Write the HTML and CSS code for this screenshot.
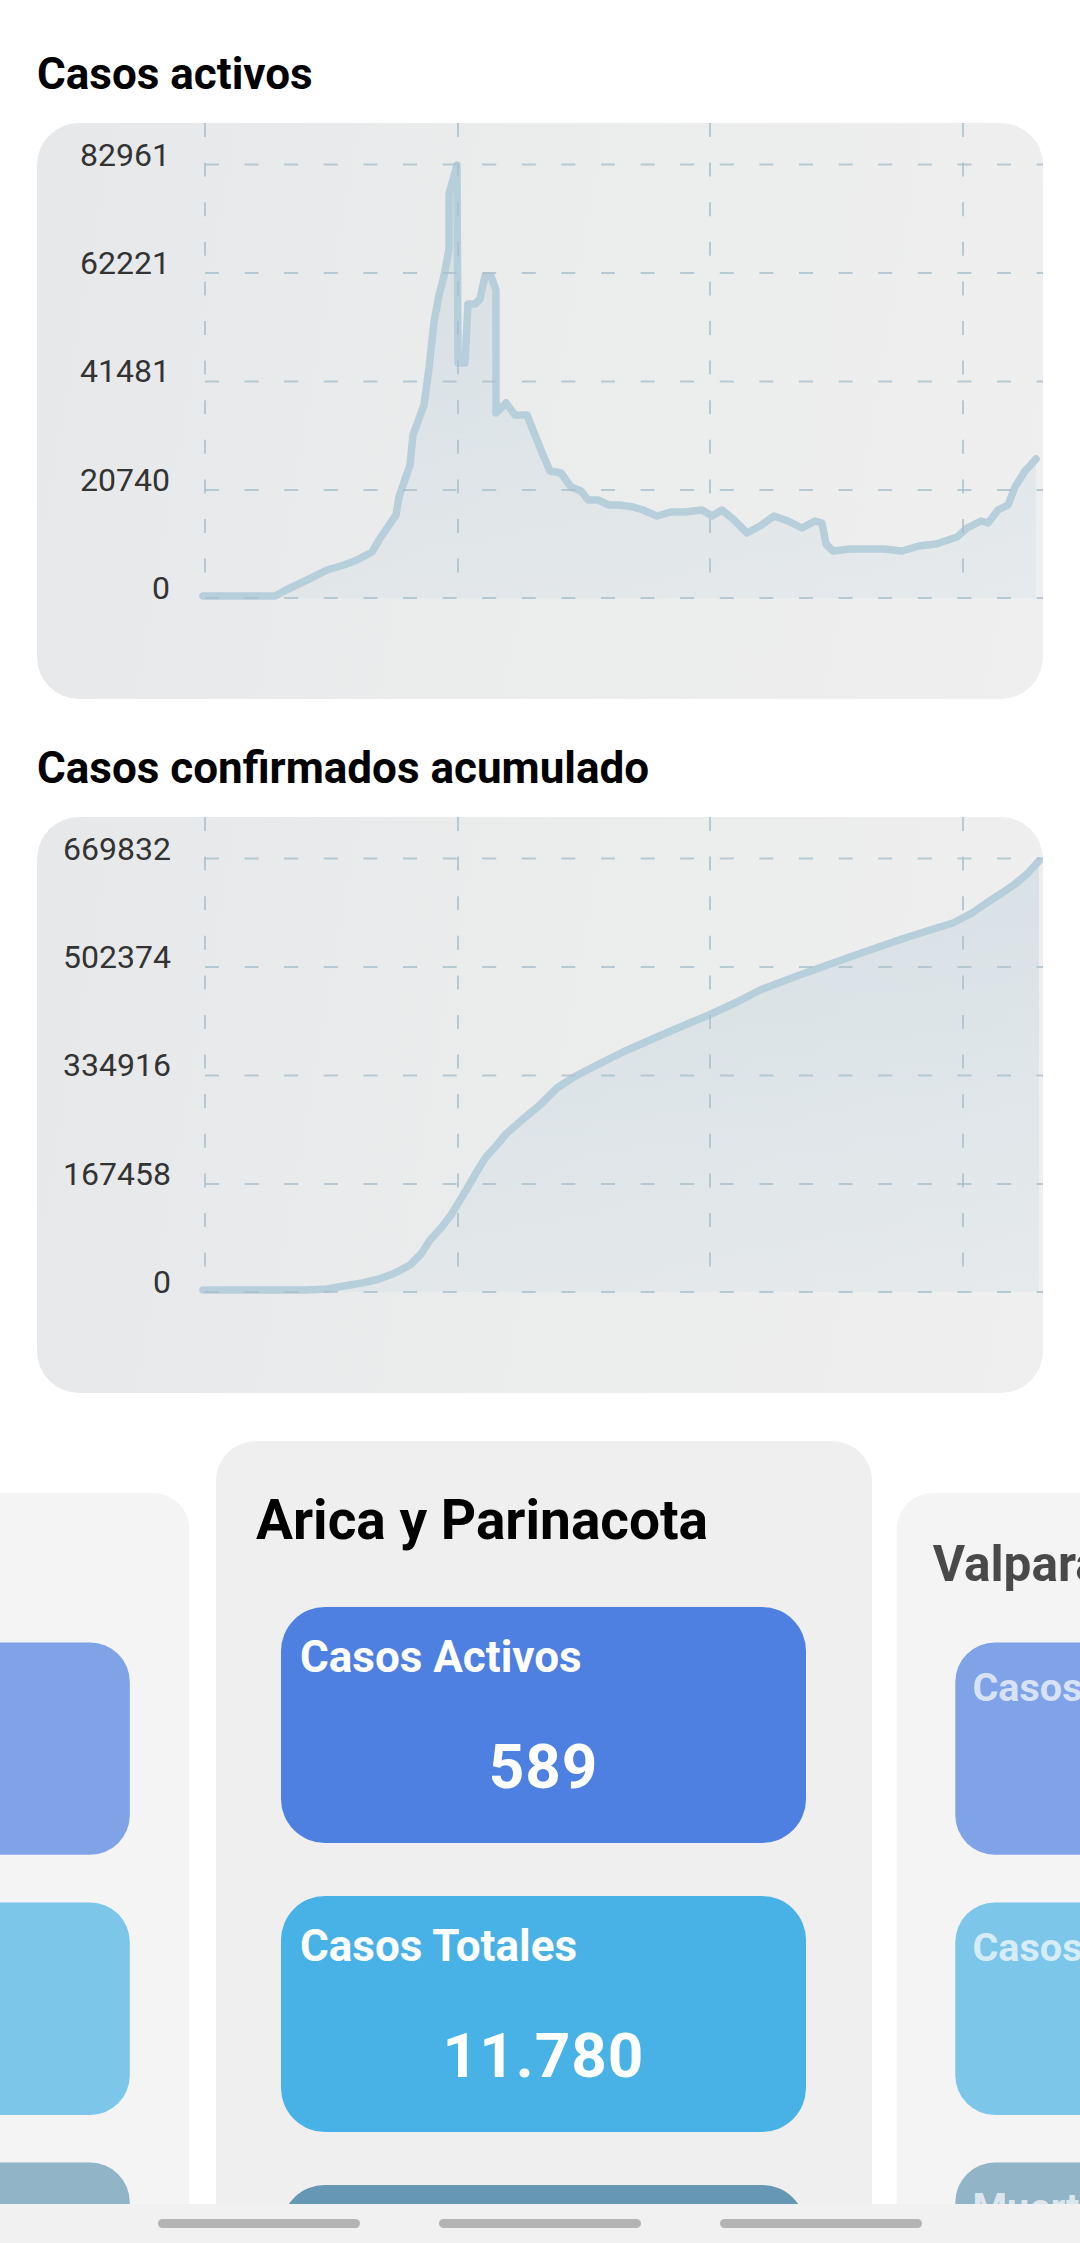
FILE: index.html
```html
<!DOCTYPE html>
<html lang="es">
<head>
<meta charset="utf-8">
<title>Casos</title>
<link rel="stylesheet" href="styles.css">
</head>
<body>
<main class="main">
  <section class="chart-block">
    <h2 class="section-title">Casos activos</h2>
    <div class="chart-card">
      <svg class="chart" viewBox="0 0 1006 576" width="1006" height="576">
        <defs>
          <linearGradient id="fillA" x1="0" y1="0" x2="0" y2="1">
            <stop offset="0" stop-color="#a9c6d6" stop-opacity="0.32"/>
            <stop offset="1" stop-color="#a9c6d6" stop-opacity="0.12"/>
          </linearGradient>
        </defs>
        <path class="area" fill="url(#fillA)" d="M166,473 L238,473 L249,467 L270,457 L290,447 L307,442 L320,437 L335,429 L342,417 L350,405 L359,392 L362,374 L373,342 L376,312 L387,282 L392,245 L397,199 L402,172 L407,153 L412,126 L412,71 L420,42 L421,240 L428,240 L431,181 L438,181 L443,176 L448,153 L454,153 L459,167 L459,290 L469,280 L478,292 L490,292 L504,327 L513,348 L524,350 L534,364 L544,368 L551,377 L561,377 L572,382 L582,382 L596,384 L606,387 L620,393 L634,389 L648,389 L665,387 L675,393 L685,387 L696,396 L710,410 L723,403 L737,393 L751,398 L765,405 L778,398 L785,400 L789,421 L796,428 L813,426 L830,426 L847,426 L865,428 L882,423 L899,421 L920,414 L930,405 L944,398 L951,400 L961,387 L971,382 L978,364 L988,348 L999,336 L999,475 L166,475 Z"/>
        <path class="line" d="M166,473 L238,473 L249,467 L270,457 L290,447 L307,442 L320,437 L335,429 L342,417 L350,405 L359,392 L362,374 L373,342 L376,312 L387,282 L392,245 L397,199 L402,172 L407,153 L412,126 L412,71 L420,42 L421,240 L428,240 L431,181 L438,181 L443,176 L448,153 L454,153 L459,167 L459,290 L469,280 L478,292 L490,292 L504,327 L513,348 L524,350 L534,364 L544,368 L551,377 L561,377 L572,382 L582,382 L596,384 L606,387 L620,393 L634,389 L648,389 L665,387 L675,393 L685,387 L696,396 L710,410 L723,403 L737,393 L751,398 L765,405 L778,398 L785,400 L789,421 L796,428 L813,426 L830,426 L847,426 L865,428 L882,423 L899,421 L920,414 L930,405 L944,398 L951,400 L961,387 L971,382 L978,364 L988,348 L999,336"/>
        <g class="grid">
          <line x1="168" y1="0" x2="168" y2="475"/>
          <line x1="421" y1="0" x2="421" y2="475"/>
          <line x1="673" y1="0" x2="673" y2="475"/>
          <line x1="926" y1="0" x2="926" y2="475"/>
          <line x1="168" y1="41.5" x2="1006" y2="41.5"/>
          <line x1="168" y1="150" x2="1006" y2="150"/>
          <line x1="168" y1="258.5" x2="1006" y2="258.5"/>
          <line x1="168" y1="367" x2="1006" y2="367"/>
          <line x1="168" y1="475" x2="1006" y2="475"/>
        </g>
        <g class="axis-label">
          <text x="133" y="43">82961</text>
          <text x="133" y="151">62221</text>
          <text x="133" y="259">41481</text>
          <text x="133" y="368">20740</text>
          <text x="133" y="476">0</text>
        </g>
      </svg>
    </div>
  </section>

  <section class="chart-block">
    <h2 class="section-title">Casos confirmados acumulado</h2>
    <div class="chart-card">
      <svg class="chart" viewBox="0 0 1006 576" width="1006" height="576">
        <defs>
          <linearGradient id="fillB" x1="0" y1="0" x2="0" y2="1">
            <stop offset="0" stop-color="#a9c6d6" stop-opacity="0.32"/>
            <stop offset="1" stop-color="#a9c6d6" stop-opacity="0.12"/>
          </linearGradient>
        </defs>
        <path class="area" fill="url(#fillB)" d="M166,473 L269,473 L290,472 L307,469 L325,466 L342,462 L358,456 L373,448 L384,437 L393,423 L404,411 L414,398 L425,380 L435,363 L442,351 L449,340 L459,329 L469,317 L486,302 L503,288 L512,279 L520,271 L537,260 L560,248 L586,235 L620,220 L655,205 L672,198 L700,185 L723,173 L760,159 L799,145 L830,134 L865,122 L890,114 L916,106 L935,96 L951,85 L965,76 L978,67 L990,57 L1002,44 L1002,475 L166,475 Z"/>
        <path class="line" d="M166,473 L269,473 L290,472 L307,469 L325,466 L342,462 L358,456 L373,448 L384,437 L393,423 L404,411 L414,398 L425,380 L435,363 L442,351 L449,340 L459,329 L469,317 L486,302 L503,288 L512,279 L520,271 L537,260 L560,248 L586,235 L620,220 L655,205 L672,198 L700,185 L723,173 L760,159 L799,145 L830,134 L865,122 L890,114 L916,106 L935,96 L951,85 L965,76 L978,67 L990,57 L1002,44"/>
        <g class="grid">
          <line x1="168" y1="0" x2="168" y2="475"/>
          <line x1="421" y1="0" x2="421" y2="475"/>
          <line x1="673" y1="0" x2="673" y2="475"/>
          <line x1="926" y1="0" x2="926" y2="475"/>
          <line x1="168" y1="41.5" x2="1006" y2="41.5"/>
          <line x1="168" y1="150" x2="1006" y2="150"/>
          <line x1="168" y1="258.5" x2="1006" y2="258.5"/>
          <line x1="168" y1="367" x2="1006" y2="367"/>
          <line x1="168" y1="475" x2="1006" y2="475"/>
        </g>
        <g class="axis-label">
          <text x="134" y="43">669832</text>
          <text x="134" y="151">502374</text>
          <text x="134" y="259">334916</text>
          <text x="134" y="368">167458</text>
          <text x="134" y="476">0</text>
        </g>
      </svg>
    </div>
  </section>

  <section class="carousel">
    <article class="region side prev">
      <h3 class="region-name">Metropolitana</h3>
      <div class="stats">
        <div class="stat active"><span class="stat-label">Casos Activos</span><span class="stat-value">6.412</span></div>
        <div class="stat total"><span class="stat-label">Casos Totales</span><span class="stat-value">343.127</span></div>
        <div class="stat deaths"><span class="stat-label">Muertes</span><span class="stat-value">11.580</span></div>
      </div>
    </article>
    <article class="region current">
      <h3 class="region-name">Arica y Parinacota</h3>
      <div class="stats">
        <div class="stat active"><span class="stat-label">Casos Activos</span><span class="stat-value">589</span></div>
        <div class="stat total"><span class="stat-label">Casos Totales</span><span class="stat-value">11.780</span></div>
        <div class="stat deaths"><span class="stat-label">Muertes</span><span class="stat-value">248</span></div>
      </div>
    </article>
    <article class="region side next">
      <h3 class="region-name">Valparaíso</h3>
      <div class="stats">
        <div class="stat active"><span class="stat-label">Casos Activos</span><span class="stat-value">2.104</span></div>
        <div class="stat total"><span class="stat-label">Casos Totales</span><span class="stat-value">48.310</span></div>
        <div class="stat deaths"><span class="stat-label">Muertes</span><span class="stat-value">1.502</span></div>
      </div>
    </article>
  </section>
</main>
<nav class="navbar">
  <span class="pill"></span>
  <span class="pill"></span>
  <span class="pill"></span>
</nav>
</body>
</html>
```
FILE: styles.css
```css
html, body {
  margin: 0;
  padding: 0;
}

body {
  width: 1080px;
  height: 2243px;
  display: flex;
  flex-direction: column;
  overflow: hidden;
  background: #ffffff;
  font-family: Roboto, "Noto Sans", "Liberation Sans", sans-serif;
}

.main {
  flex: 1;
  min-height: 0;
  overflow: hidden;
  display: flex;
  flex-direction: column;
  gap: 43px;
  padding-top: 48px;
}

.chart-block {
  display: flex;
  flex-direction: column;
  gap: 23px;
  padding: 0 37px;
}

.section-title {
  margin: 0;
  font-size: 44px;
  line-height: 52px;
  font-weight: 700;
  color: #000000;
}

.chart-card {
  height: 576px;
  border-radius: 42px;
  background: linear-gradient(100deg, #e7e8ea 0%, #ebecec 50%, #efefef 100%);
}

.chart {
  display: block;
  overflow: visible;
}

.line {
  fill: none;
  stroke: #b7cedb;
  stroke-width: 7.5;
  stroke-linejoin: round;
  stroke-linecap: round;
}

.grid line {
  stroke: #a9c0cc;
  stroke-opacity: 0.8;
  stroke-width: 2;
  stroke-dasharray: 14 25.6;
}

.axis-label text {
  font-family: Roboto, "Noto Sans", sans-serif;
  font-size: 32px;
  font-weight: 400;
  fill: #333333;
  text-anchor: end;
}

.carousel {
  margin-top: 5px;
  display: flex;
  justify-content: center;
  padding-left: 8px;
}

.region {
  flex: 0 0 656px;
  height: 900px;
  box-sizing: border-box;
  padding: 47px 0 0 40px;
  border-radius: 40px;
  background: #efefef;
}

.region-name {
  margin: 0;
  font-size: 55px;
  line-height: 64px;
  font-weight: 700;
  color: #000000;
  white-space: nowrap;
}

.stats {
  margin: 55px 0 0 25px;
  width: 525px;
  display: flex;
  flex-direction: column;
  gap: 53px;
}

.stat {
  height: 236px;
  box-sizing: border-box;
  padding: 24px 19px 0;
  border-radius: 44px;
  display: flex;
  flex-direction: column;
}

.stat.active { background: #4e80e1; }
.stat.total { background: #48b2e6; }
.stat.deaths { background: #6698b3; }

.stat-label {
  font-size: 44px;
  line-height: 52px;
  font-weight: 700;
  color: #ffffff;
  white-space: nowrap;
}

.stat-value {
  margin-top: 48px;
  text-align: center;
  font-size: 62px;
  line-height: 72px;
  font-weight: 700;
  letter-spacing: 1px;
  color: #ffffff;
}

/* neighbouring pages of the pager: scaled down and faded */
.region.side {
  transform-origin: top center;
  background: rgba(239, 239, 239, 0.7);
}

.region.prev {
  transform: translate(6px, 52px) scale(0.9);
}

.region.next {
  transform: translate(-8px, 52px) scale(0.9);
}

.side .region-name { color: rgba(0, 0, 0, 0.7); }
.side .stat.active { background: rgba(78, 128, 225, 0.7); }
.side .stat.total { background: rgba(72, 178, 230, 0.7); }
.side .stat.deaths { background: rgba(102, 152, 179, 0.7); }
.side .stat-label,
.side .stat-value { color: rgba(255, 255, 255, 0.7); }

.navbar {
  flex: 0 0 39px;
  box-sizing: border-box;
  padding-top: 15px;
  display: flex;
  justify-content: center;
  align-items: flex-start;
  gap: 79px;
  background: #f1f1f1;
}

.pill {
  width: 202px;
  height: 9px;
  border-radius: 5px;
  background: #b4b4b4;
}
```
